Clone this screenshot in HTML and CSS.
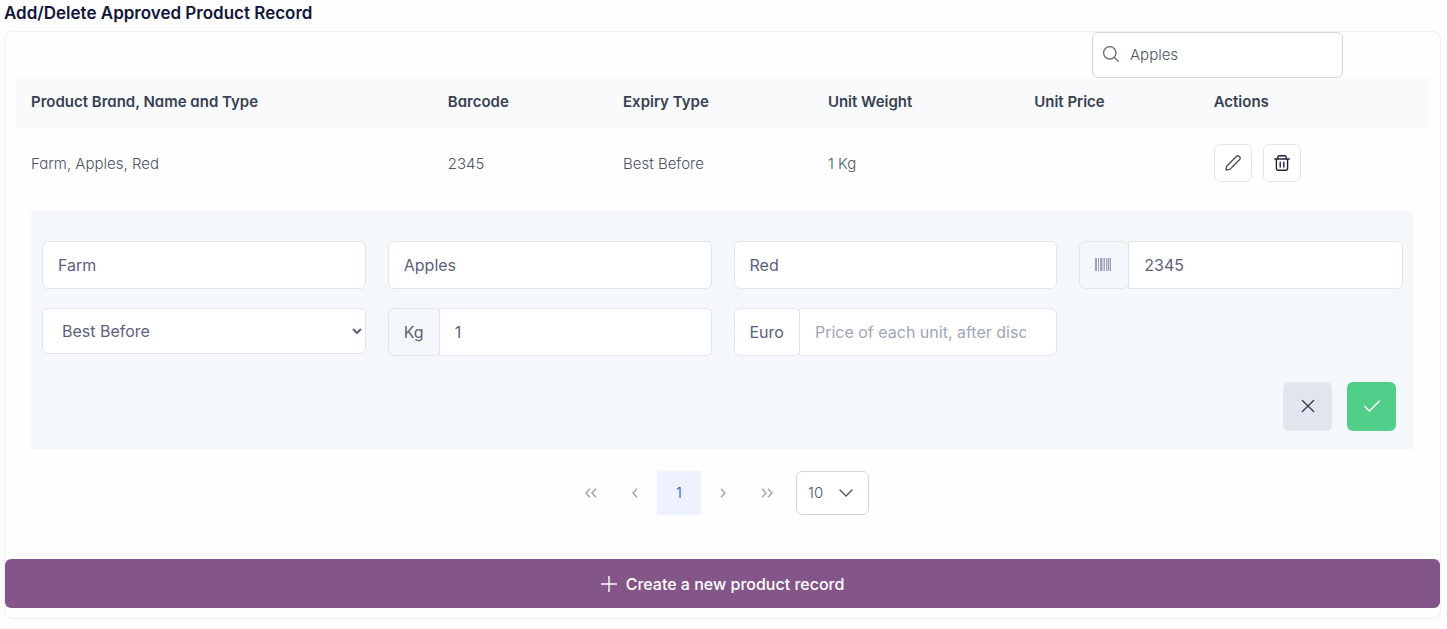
FILE: index.html
```html
<!DOCTYPE html>
<html lang="en">
<head>
    <meta charset="UTF-8">
    <meta name="viewport" content="width=device-width, initial-scale=1.0">
    <title>Approved Product Records</title>
    <link rel="stylesheet" href="styles.css">
</head>
<body>
    <main class="page">
        <h1>Add/Delete Approved Product Record</h1>
        <div class="card">
            <div class="table-wrap">
                <div class="toolbar">
                    <label class="search">
                        <svg class="icon" viewBox="0 0 16 16" aria-hidden="true"><circle cx="6.8" cy="6.8" r="6.2"/><path d="M11.3 11.3L15.4 15.4"/></svg>
                        <input type="text" value="Apples" aria-label="Search">
                    </label>
                </div>
                <table class="products">
                    <thead>
                        <tr>
                            <th class="col-name">Product Brand, Name and Type</th>
                            <th class="col-barcode">Barcode</th>
                            <th class="col-expiry">Expiry Type</th>
                            <th class="col-weight">Unit Weight</th>
                            <th class="col-price">Unit Price</th>
                            <th>Actions</th>
                        </tr>
                    </thead>
                    <tbody>
                        <tr>
                            <td>Farm, Apples, Red</td>
                            <td>2345</td>
                            <td>Best Before</td>
                            <td>1 Kg</td>
                            <td></td>
                            <td>
                                <div class="row-actions">
                                    <button class="icon-btn" aria-label="Edit">
                                        <svg class="icon" viewBox="0 0 16 16" aria-hidden="true"><path d="M1 15L1.6 11.2L11.4 1.4Q13 .1 14.4 1.5Q15.9 3 14.6 4.6L4.8 14.4Z"/></svg>
                                    </button>
                                    <button class="icon-btn delete-btn" aria-label="Delete">
                                        <svg class="icon" viewBox="0 0 16 16" aria-hidden="true"><path d="M.8 4H15.2M3.8 4V2.2Q3.8 .8 5.2 .8H10.8Q12.2 .8 12.2 2.2V4M2.4 4V13.6Q2.4 15.2 4 15.2H12Q13.6 15.2 13.6 13.6V4M6.2 7.2V12M9.8 7.2V12"/></svg>
                                    </button>
                                </div>
                            </td>
                        </tr>
                        <tr>
                            <td colspan="6">
                                <form class="edit-form">
                                    <div class="fields">
                                        <input class="field" type="text" value="Farm" aria-label="Brand">
                                        <input class="field" type="text" value="Apples" aria-label="Name">
                                        <input class="field" type="text" value="Red" aria-label="Type">
                                        <div class="group">
                                            <label class="addon" for="barcode" aria-label="Barcode">
                                                <svg class="barcode" viewBox="0 0 18 14" aria-hidden="true"><path d="M0 0h2v13H0zM3 0h1v13H3zM5 0h2v13H5zM7.5 0h1v13h-1zM9 0h1v13H9zM11 0h1.5v13H11zM13 0h1v13h-1zM14.5 0h1.5v13h-1.5z"/></svg>
                                            </label>
                                            <input class="field" id="barcode" type="text" value="2345">
                                        </div>
                                        <select class="field select" aria-label="Expiry Type">
                                            <option>Best Before</option>
                                            <option>Use By</option>
                                        </select>
                                        <div class="group">
                                            <label class="addon" for="weight">Kg</label>
                                            <input class="field" id="weight" type="text" value="1">
                                        </div>
                                        <div class="group">
                                            <label class="addon addon-light" for="price">Euro</label>
                                            <input class="field price" id="price" type="text" placeholder="Price of each unit, after discount">
                                        </div>
                                    </div>
                                    <div class="form-actions">
                                        <button type="button" class="form-btn" aria-label="Cancel">
                                            <svg class="icon" viewBox="0 0 16 16" aria-hidden="true"><path d="M2.4 2.4L13.6 13.6M13.6 2.4L2.4 13.6"/></svg>
                                        </button>
                                        <button type="button" class="form-btn save-btn" aria-label="Save">
                                            <svg class="icon" viewBox="0 0 16 16" aria-hidden="true"><path d="M.6 8.2L5.4 13L15.4 3"/></svg>
                                        </button>
                                    </div>
                                </form>
                            </td>
                        </tr>
                    </tbody>
                </table>
                <nav class="paginator" aria-label="Pages">
                    <button class="page-btn" aria-label="First page"><svg class="arrow" viewBox="0 0 12 12" aria-hidden="true"><path d="M5 1.8L1 6L5 10.2M11 1.8L7 6L11 10.2"/></svg></button>
                    <button class="page-btn" aria-label="Previous page"><svg class="arrow" viewBox="0 0 12 12" aria-hidden="true"><path d="M8 1.8L4 6L8 10.2"/></svg></button>
                    <button class="page-btn current">1</button>
                    <button class="page-btn" aria-label="Next page"><svg class="arrow" viewBox="0 0 12 12" aria-hidden="true"><path d="M4 1.8L8 6L4 10.2"/></svg></button>
                    <button class="page-btn" aria-label="Last page"><svg class="arrow" viewBox="0 0 12 12" aria-hidden="true"><path d="M1 1.8L5 6L1 10.2M7 1.8L11 6L7 10.2"/></svg></button>
                    <div class="page-size">
                        <select aria-label="Rows per page">
                            <option>10</option>
                            <option>20</option>
                            <option>50</option>
                        </select>
                        <svg class="icon" viewBox="0 0 14 14" aria-hidden="true"><path d="M1 4L7 10L13 4"/></svg>
                    </div>
                </nav>
            </div>
            <button class="create-btn">
                <svg class="icon" viewBox="0 0 16 16" aria-hidden="true"><path d="M8 .6V15.4M.6 8H15.4"/></svg>
                Create a new product record
            </button>
        </div>
    </main>
</body>
</html>
```

FILE: styles.css
```css
:root {
    --text: #4b5563;
    --heading: #374151;
    --title: #12173a;
    --field-text: #5e6078;
    --field-border: #e2e5ee;
    --panel: #f4f8fb;
    --control-border: #d1d5db;
    --purple: #845588;
    --green: #51ce8a;
}
* {
    box-sizing: border-box;
}
body {
    margin: 0;
    background: #fefefe;
    font-family: Inter, "Liberation Sans", sans-serif;
    font-size: 15px;
    color: var(--text);
}
button, input, select {
    font: inherit;
    color: inherit;
}
button {
    display: flex;
    align-items: center;
    justify-content: center;
    padding: 0;
    cursor: pointer;
}
.page {
    padding: 0 6px 8px 4px;
}
h1 {
    margin: 0;
    padding: 1px 0 6px;
    font-size: 17px;
    line-height: 24px;
    font-weight: 600;
    color: var(--title);
}
.card {
    padding-bottom: 10px;
    border: 1px solid #eeeff4;
    border-radius: 8px;
}
.icon {
    width: 16px;
    height: 16px;
    flex: none;
    fill: none;
    stroke: currentColor;
    stroke-width: 1.4;
    stroke-linecap: round;
    stroke-linejoin: round;
}

/* Product table */
.table-wrap {
    padding: 0 11px;
    font-weight: 300;
    font-feature-settings: "cv11";
}
.toolbar {
    display: flex;
    justify-content: flex-end;
    padding-right: 86px;
}
.search {
    display: flex;
    align-items: center;
    gap: 11px;
    width: 251px;
    height: 46px;
    padding: 0 10px 2px;
    background: #fff;
    border: 1px solid var(--control-border);
    border-radius: 6px;
}
.search .icon {
    color: #6b7280;
}
.search input {
    flex: 1;
    min-width: 0;
    padding: 0;
    border: 0;
    outline: 0;
    background: none;
    font-feature-settings: inherit;
}
.products {
    width: 100%;
    table-layout: fixed;
    border-collapse: collapse;
}
th, td {
    padding: 15px 15px 14px;
    text-align: left;
}
th {
    padding: 12px 15px 15px;
    line-height: 24px;
    font-weight: 600;
    color: var(--heading);
    background: #f9fafc;
}
.col-name {
    width: 29.5%;
}
.col-barcode {
    width: 12.4%;
}
.col-expiry {
    width: 14.5%;
}
.col-weight {
    width: 14.6%;
}
.col-price {
    width: 12.7%;
}
.row-actions {
    display: flex;
    gap: 11px;
}
.icon-btn {
    width: 38px;
    height: 38px;
    background: #fff;
    border: 1px solid var(--field-border);
    border-radius: 6px;
}
.delete-btn {
    color: #1f2138;
}

/* Edit form */
.edit-form {
    padding: 30px 11px 18px;
    background: var(--panel);
    font-size: 16px;
    font-weight: 400;
    font-feature-settings: normal;
    color: var(--field-text);
}
.fields {
    display: grid;
    grid-template-columns: repeat(4, 1fr);
    gap: 19px 22px;
    align-items: start;
}
.field {
    width: 100%;
    min-width: 0;
    height: 48px;
    padding: 0 15px;
    background: #fff;
    border: 1px solid var(--field-border);
    border-radius: 6px;
}
.field::placeholder {
    color: #a1a5b7;
}
.select {
    height: 46px;
}
.group {
    display: flex;
}
.group .field {
    flex: 1;
    margin-left: -1px;
    border-radius: 0 6px 6px 0;
}
.group .price {
    padding-right: 30px;
}
.addon {
    display: flex;
    align-items: center;
    padding: 0 15px;
    background: var(--panel);
    border: 1px solid var(--field-border);
    border-radius: 6px;
}
.addon-light {
    background: #fff;
}
.barcode {
    width: 18px;
    height: 14px;
    fill: #a1a5b7;
}
.form-actions {
    display: flex;
    justify-content: flex-end;
    gap: 15px;
    padding: 26px 7px 0 0;
}
.form-btn {
    width: 49px;
    height: 49px;
    padding-bottom: 2px;
    color: #3f4057;
    background: #e2e5ee;
    border: 0;
    border-radius: 6px;
}
.save-btn {
    color: #fff;
    background: var(--green);
}

/* Paginator */
.paginator {
    display: flex;
    justify-content: center;
    padding: 8px 0 44px;
}
.page-btn {
    width: 44px;
    height: 44px;
    border: 0;
    background: none;
    color: #9ca3af;
}
.current {
    padding-bottom: 2px;
    color: #4338ca;
    background: #eef2ff;
}
.arrow {
    width: 12px;
    height: 12px;
    fill: none;
    stroke: currentColor;
    stroke-width: 1.4;
}
.page-size {
    position: relative;
    width: 73px;
    height: 44px;
    margin: 0 7px;
}
.page-size select {
    width: 100%;
    height: 100%;
    padding: 0 11px 2px;
    appearance: none;
    background: #fff;
    border: 1px solid var(--control-border);
    border-radius: 6px;
}
.page-size .icon {
    position: absolute;
    top: 15px;
    right: 16px;
    width: 14px;
    height: 14px;
    pointer-events: none;
}
.create-btn {
    gap: 9px;
    width: 100%;
    height: 49px;
    font-size: 16px;
    font-weight: 500;
    color: #fff;
    background: var(--purple);
    border: 0;
    border-radius: 6px;
}
```
